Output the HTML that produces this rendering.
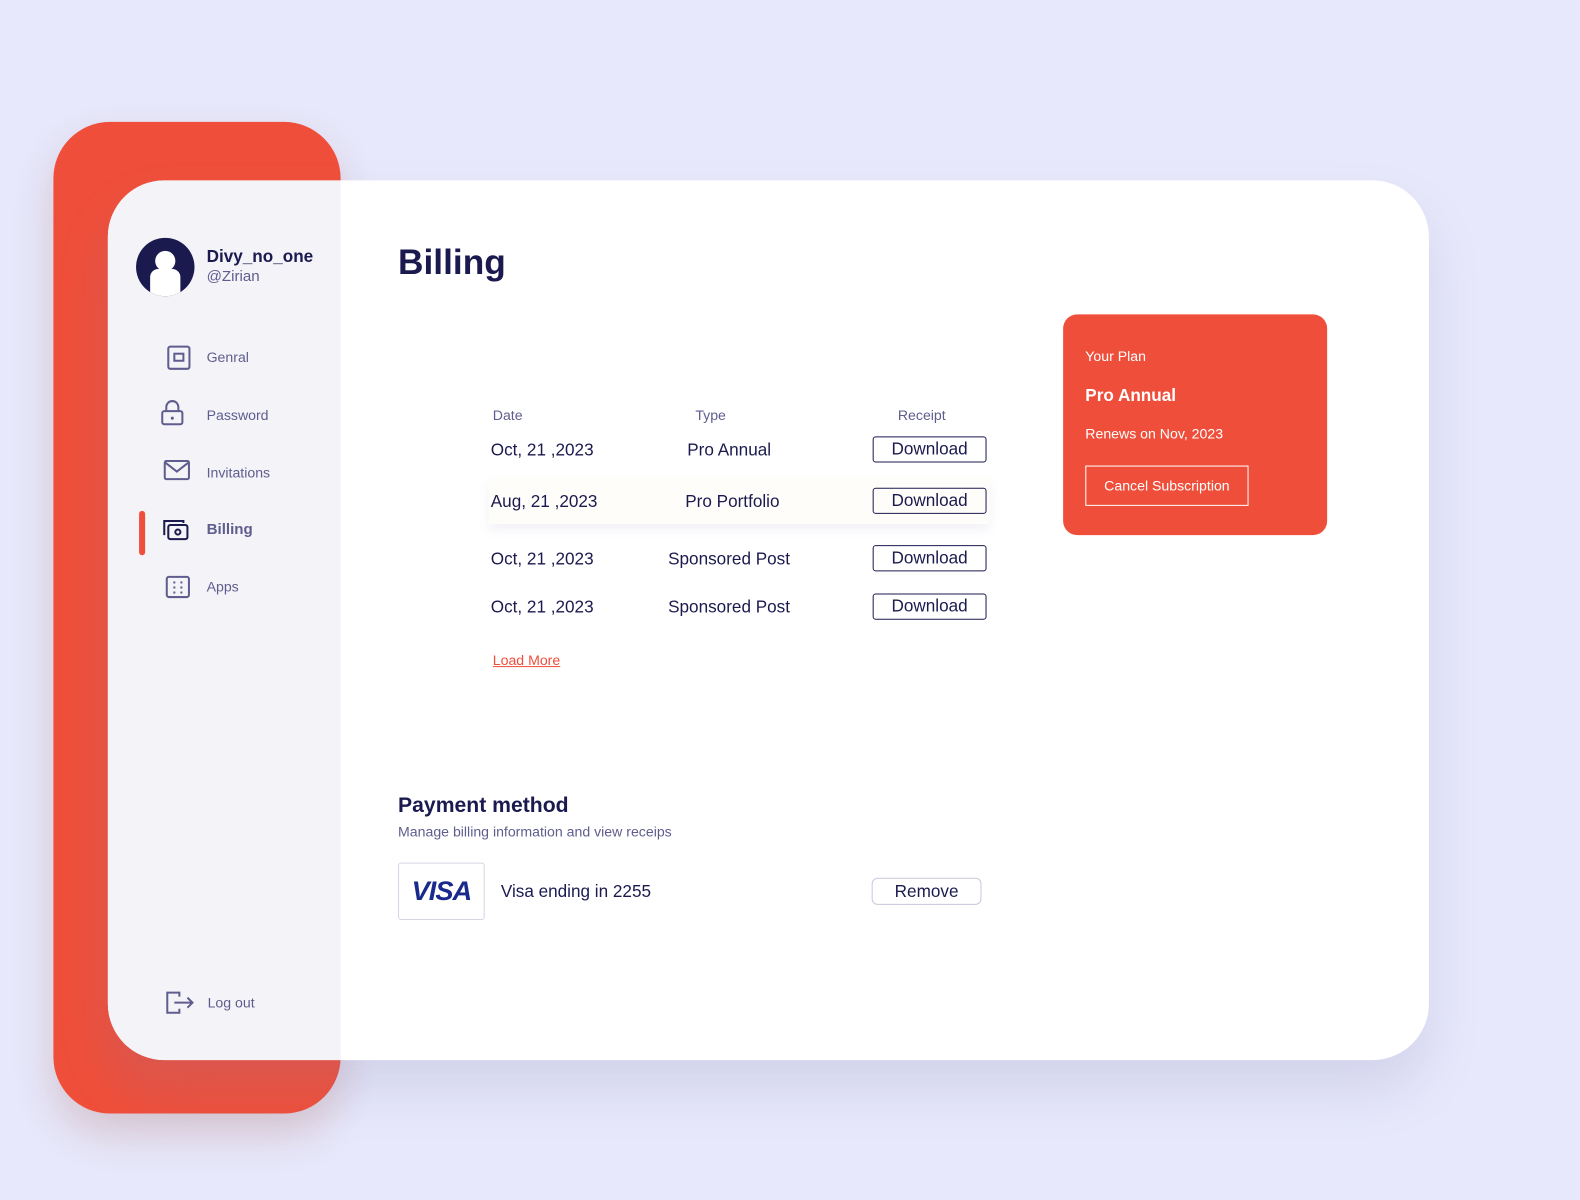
<!DOCTYPE html>
<html><head><meta charset="utf-8"><style>
*{margin:0;padding:0;box-sizing:border-box}
body{width:1580px;height:1200px;background:#e7e8fb;font-family:"Liberation Sans",sans-serif;position:relative;overflow:hidden;color:#1b1a4f}
#w{position:absolute;left:0;top:0;width:1568px;height:1191px;transform:scale(1.0077);transform-origin:0 0}
.a{position:absolute}
.red{left:53px;top:121px;width:285px;height:984px;background:#ef4f3a;border-radius:56px;box-shadow:0 20px 40px rgba(150,60,40,.2)}
.card{left:107px;top:179px;width:1311px;height:873px;background:#fff;border-radius:56px;overflow:hidden;box-shadow:0 30px 50px rgba(120,120,170,.18)}
.side{left:0;top:0;width:231px;height:873px;background:#f3f3f8}
.nav{font-size:14px;color:#5f5d8e}
.th{font-size:14px;color:#5f5d8e}
.td{font-size:17px;color:#1b1a4f}
.btn{border:1px solid #1b1a4f;border-radius:3px;width:113px;height:26px;font-size:17px;text-align:center;line-height:24px;color:#1b1a4f}
</style></head><body><div id="w">
<div class="a red"></div>
<div class="a card">
 <div class="a side">
  <div class="a" style="left:28px;top:57px;width:58px;height:58px;border-radius:50%;background:#1b1a4f;overflow:hidden">
   <div class="a" style="left:19px;top:13px;width:20px;height:20px;border-radius:50%;background:#fff"></div>
   <div class="a" style="left:14px;top:31px;width:30px;height:30px;border-radius:8px 8px 0 0;background:#fff"></div>
  </div>
  <div class="a" style="left:98px;top:66px;font-size:17px;font-weight:bold">Divy_no_one</div>
  <div class="a" style="left:98px;top:87px;font-size:15px;color:#5f5d8e">@Zirian</div>
  <svg class="a" style="left:58px;top:163px" width="26" height="26"><rect x="2" y="2" width="21" height="22" rx="2" fill="none" stroke="#5f5d8e" stroke-width="2"/><rect x="8" y="9" width="9" height="7" fill="none" stroke="#5f5d8e" stroke-width="2"/></svg>
  <div class="a nav" style="left:98px;top:167px">Genral</div>
  <svg class="a" style="left:52px;top:218px" width="24" height="26"><path d="M6 11V7a6 6 0 0 1 12 0v4" fill="none" stroke="#5f5d8e" stroke-width="2"/><rect x="2" y="11" width="20" height="13" rx="2" fill="none" stroke="#5f5d8e" stroke-width="2"/><circle cx="12" cy="18" r="1.5" fill="#5f5d8e"/></svg>
  <div class="a nav" style="left:98px;top:225px">Password</div>
  <svg class="a" style="left:55px;top:277px" width="28" height="22"><rect x="1.5" y="1.5" width="24" height="18" rx="1.5" fill="none" stroke="#5f5d8e" stroke-width="2"/><path d="M2 3l11.5 9L25 3" fill="none" stroke="#5f5d8e" stroke-width="2"/></svg>
  <div class="a nav" style="left:98px;top:282px">Invitations</div>
  <div class="a" style="left:31px;top:328px;width:6px;height:44px;border-radius:3px;background:#ef4f3a"></div>
  <svg class="a" style="left:53px;top:334px" width="30" height="26"><path d="M4 17H3V4h19v2" fill="none" stroke="#1b1a4f" stroke-width="2"/><rect x="7" y="8" width="19" height="14" rx="2" fill="none" stroke="#1b1a4f" stroke-width="2"/><circle cx="16.5" cy="15" r="2.5" fill="none" stroke="#1b1a4f" stroke-width="2"/></svg>
  <div class="a nav" style="left:98px;top:338px;font-weight:bold;font-size:15px">Billing</div>
  <svg class="a" style="left:57px;top:392px" width="26" height="24"><rect x="1.5" y="1.5" width="22" height="20" rx="2" fill="none" stroke="#5f5d8e" stroke-width="2"/><g fill="#5f5d8e"><rect x="8" y="6" width="2" height="2"/><rect x="8" y="11" width="2" height="2"/><rect x="8" y="16" width="2" height="2"/><rect x="15" y="6" width="2" height="2"/><rect x="15" y="11" width="2" height="2"/><rect x="15" y="16" width="2" height="2"/></g></svg>
  <div class="a nav" style="left:98px;top:395px">Apps</div>
  <svg class="a" style="left:57px;top:803px" width="30" height="26"><path d="M14 7V3H2v20h12v-4" fill="none" stroke="#5f5d8e" stroke-width="2"/><path d="M9 13h18M22 8l5 5-5 5" fill="none" stroke="#5f5d8e" stroke-width="2"/></svg>
  <div class="a nav" style="left:99px;top:808px">Log out</div>
 </div>
 <div class="a" style="left:288px;top:62px;font-size:35px;font-weight:bold">Billing</div>
 <div class="a th" style="left:382px;top:225px">Date</div>
 <div class="a th" style="left:583px;top:225px">Type</div>
 <div class="a th" style="left:784px;top:225px">Receipt</div>
 <div class="a td" style="left:380px;top:258px">Oct, 21 ,2023</div>
 <div class="a td" style="left:575px;top:258px">Pro Annual</div>
 <div class="a btn" style="left:759px;top:254px">Download</div>
 <div class="a" style="left:378px;top:295px;width:497px;height:46px;background:#fffdfa;box-shadow:0 6px 10px rgba(120,120,180,.1)"></div>
 <div class="a td" style="left:380px;top:309px">Aug, 21 ,2023</div>
 <div class="a td" style="left:573px;top:309px">Pro Portfolio</div>
 <div class="a btn" style="left:759px;top:305px">Download</div>
 <div class="a td" style="left:380px;top:366px">Oct, 21 ,2023</div>
 <div class="a td" style="left:556px;top:366px">Sponsored Post</div>
 <div class="a btn" style="left:759px;top:362px">Download</div>
 <div class="a td" style="left:380px;top:414px">Oct, 21 ,2023</div>
 <div class="a td" style="left:556px;top:414px">Sponsored Post</div>
 <div class="a btn" style="left:759px;top:410px">Download</div>
 <div class="a" style="left:382px;top:468px;font-size:14px;color:#ef4f3a;text-decoration:underline">Load More</div>
 <div class="a" style="left:948px;top:133px;width:262px;height:219px;background:#ef4f3a;border-radius:14px;color:#fff">
  <div class="a" style="left:22px;top:33px;font-size:14px">Your Plan</div>
  <div class="a" style="left:22px;top:71px;font-size:17px;font-weight:bold">Pro Annual</div>
  <div class="a" style="left:22px;top:110px;font-size:14px">Renews on Nov, 2023</div>
  <div class="a" style="left:22px;top:150px;width:162px;height:40px;border:1px solid #fff;font-size:14px;line-height:38px;text-align:center">Cancel Subscription</div>
 </div>
 <div class="a" style="left:288px;top:609px;font-size:21px;font-weight:bold">Payment method</div>
 <div class="a" style="left:288px;top:638px;font-size:14px;color:#5f5d8e">Manage billing information and view receips</div>
 <div class="a" style="left:288px;top:677px;width:86px;height:57px;border:1px solid #d5d5e3;border-radius:3px;text-align:center;line-height:55px;font-size:27px;font-weight:bold;font-style:italic;color:#1a2a8c;letter-spacing:-1px">VISA</div>
 <div class="a td" style="left:390px;top:696px">Visa ending in 2255</div>
 <div class="a" style="left:758px;top:692px;width:109px;height:27px;border:1px solid #c8c8dc;border-radius:6px;text-align:center;line-height:25px;font-size:17px">Remove</div>
</div>
</div></body></html>
